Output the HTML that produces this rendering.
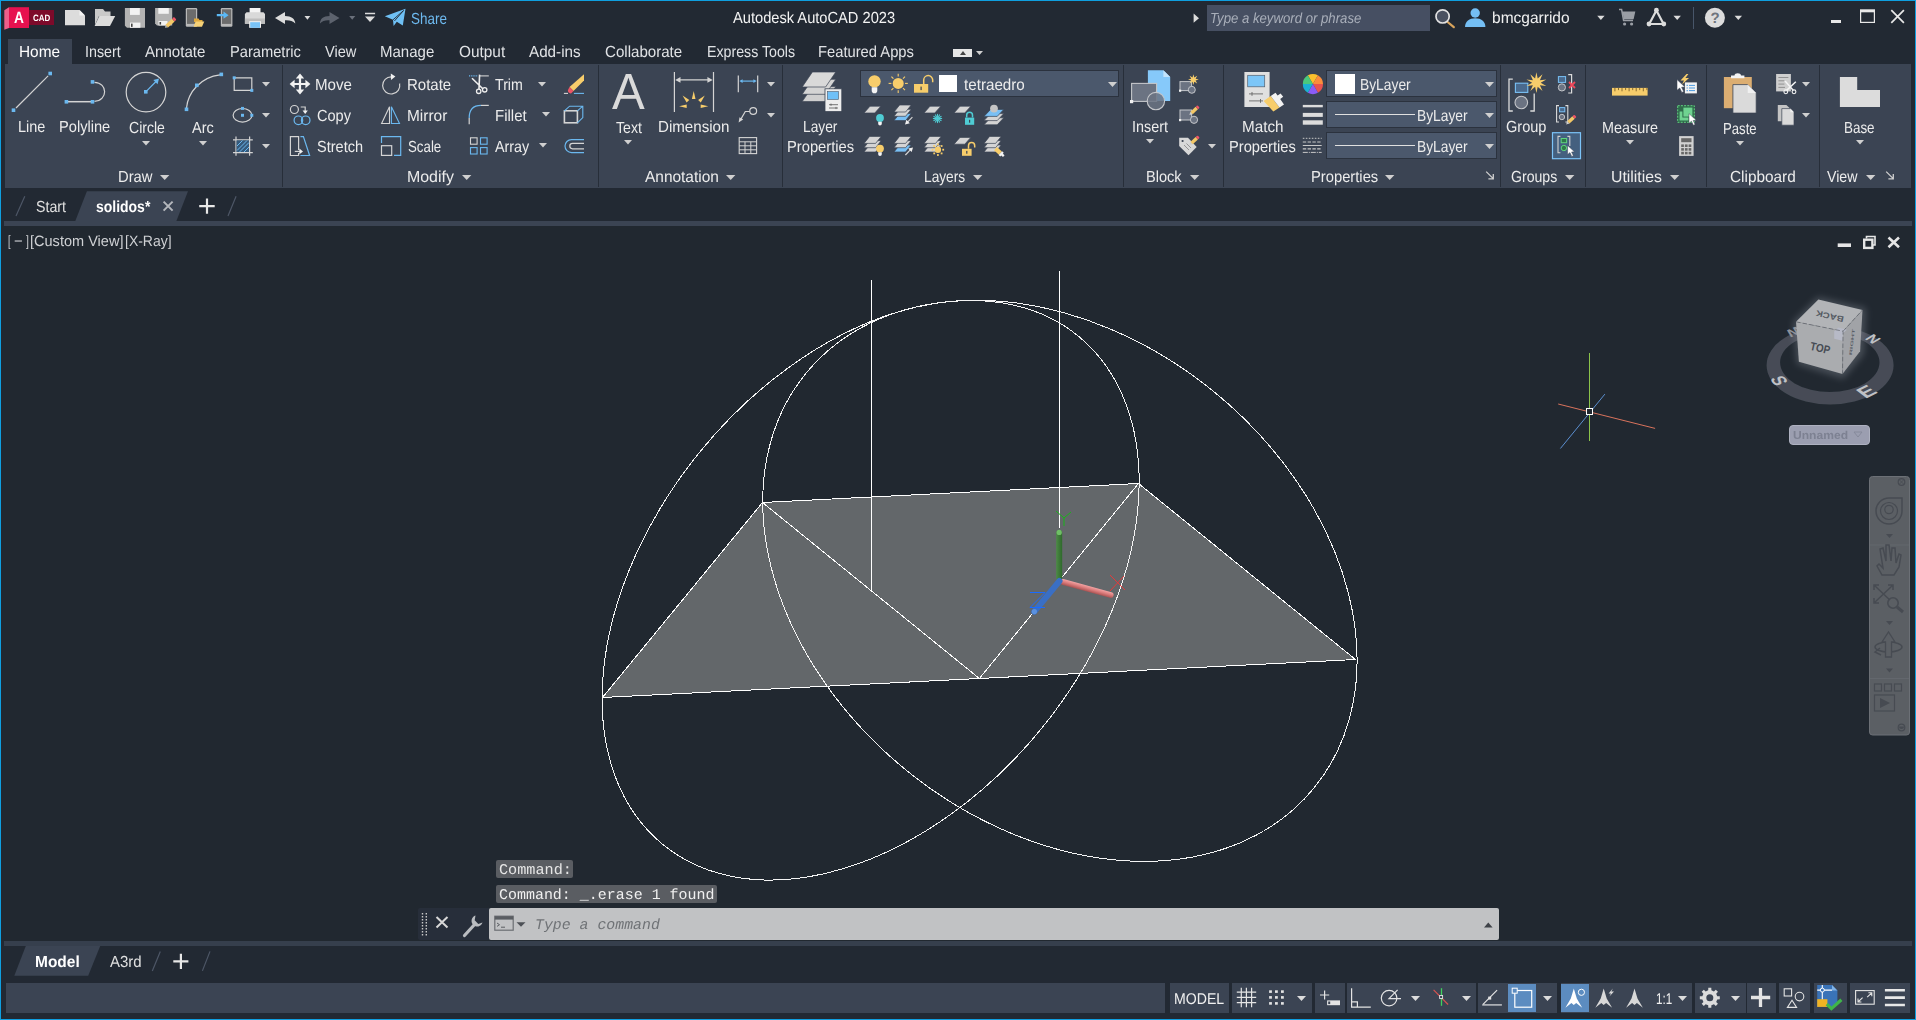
<!DOCTYPE html>
<html lang="en"><head><meta charset="utf-8"><title>Autodesk AutoCAD 2023</title>
<style>html,body{margin:0;padding:0}body{width:1916px;height:1020px;overflow:hidden;position:relative;background:#222933;font-family:'Liberation Sans', sans-serif}svg{display:block;overflow:visible}span{text-rendering:geometricPrecision}</style>
</head><body>
<div style="position:absolute;left:0px;top:0px;width:1916px;height:1020px;background:#0f9fe0;"></div>
<div style="position:absolute;left:1px;top:1px;width:1914px;height:1018px;background:#222933;"></div>
<div style="position:absolute;left:5px;top:64px;width:1906px;height:124px;background:#3b4453;"></div>
<div style="position:absolute;left:8px;top:39px;width:64px;height:26px;background:#3b4453;"></div>
<div style="position:absolute;left:1px;top:226px;width:1914px;height:715px;background:#212830;"></div>
<div style="position:absolute;left:4px;top:221px;width:1908px;height:5px;background:#3b4453;"></div>
<div style="position:absolute;left:4px;top:941px;width:1908px;height:5px;background:#363f4d;"></div>
<div style="position:absolute;left:282px;top:65px;width:1px;height:122px;background:#272e39;"></div>
<div style="position:absolute;left:598px;top:65px;width:1px;height:122px;background:#272e39;"></div>
<div style="position:absolute;left:782px;top:65px;width:1px;height:122px;background:#272e39;"></div>
<div style="position:absolute;left:1123px;top:65px;width:1px;height:122px;background:#272e39;"></div>
<div style="position:absolute;left:1223px;top:65px;width:1px;height:122px;background:#272e39;"></div>
<div style="position:absolute;left:1500px;top:65px;width:1px;height:122px;background:#272e39;"></div>
<div style="position:absolute;left:1585px;top:65px;width:1px;height:122px;background:#272e39;"></div>
<div style="position:absolute;left:1706px;top:65px;width:1px;height:122px;background:#272e39;"></div>
<div style="position:absolute;left:1819px;top:65px;width:1px;height:122px;background:#272e39;"></div>
<span style="position:absolute;left:411.30px;top:12px;font:normal 400 16px/1 'Liberation Sans', sans-serif;transform:scaleX(0.8412);transform-origin:0 0;color:#6db9ef;white-space:pre;">Share</span>
<span style="position:absolute;left:732.60px;top:11px;font:normal 400 16px/1 'Liberation Sans', sans-serif;transform:scaleX(0.9158);transform-origin:0 0;color:#f4f4f4;white-space:pre;">Autodesk AutoCAD 2023</span>
<div style="position:absolute;left:1207px;top:5px;width:223px;height:26px;background:#464f62;"></div>
<span style="position:absolute;left:1209.80px;top:12px;font:italic 400 14.6px/1 'Liberation Sans', sans-serif;transform:scaleX(0.9026);transform-origin:0 0;color:#a9afba;white-space:pre;">Type a keyword or phrase</span>
<span style="position:absolute;left:1492.03px;top:11px;font:normal 400 16px/1 'Liberation Sans', sans-serif;transform:scaleX(0.9693);transform-origin:0 0;color:#f0f0f0;white-space:pre;">bmcgarrido</span>
<span style="position:absolute;left:18.54px;top:45px;font:normal 400 16px/1 'Liberation Sans', sans-serif;transform:scaleX(0.9622);transform-origin:0 0;color:#ffffff;white-space:pre;">Home</span>
<span style="position:absolute;left:84.61px;top:45px;font:normal 400 16px/1 'Liberation Sans', sans-serif;transform:scaleX(0.8921);transform-origin:0 0;color:#e0e2e5;white-space:pre;">Insert</span>
<span style="position:absolute;left:145.20px;top:45px;font:normal 400 16px/1 'Liberation Sans', sans-serif;transform:scaleX(0.9430);transform-origin:0 0;color:#e0e2e5;white-space:pre;">Annotate</span>
<span style="position:absolute;left:230.28px;top:45px;font:normal 400 16px/1 'Liberation Sans', sans-serif;transform:scaleX(0.9168);transform-origin:0 0;color:#e0e2e5;white-space:pre;">Parametric</span>
<span style="position:absolute;left:325.10px;top:45px;font:normal 400 16px/1 'Liberation Sans', sans-serif;transform:scaleX(0.9129);transform-origin:0 0;color:#e0e2e5;white-space:pre;">View</span>
<span style="position:absolute;left:380.36px;top:45px;font:normal 400 16px/1 'Liberation Sans', sans-serif;transform:scaleX(0.9381);transform-origin:0 0;color:#e0e2e5;white-space:pre;">Manage</span>
<span style="position:absolute;left:458.60px;top:45px;font:normal 400 16px/1 'Liberation Sans', sans-serif;transform:scaleX(0.9612);transform-origin:0 0;color:#e0e2e5;white-space:pre;">Output</span>
<span style="position:absolute;left:529.30px;top:45px;font:normal 400 16px/1 'Liberation Sans', sans-serif;transform:scaleX(0.9512);transform-origin:0 0;color:#e0e2e5;white-space:pre;">Add-ins</span>
<span style="position:absolute;left:605.30px;top:45px;font:normal 400 16px/1 'Liberation Sans', sans-serif;transform:scaleX(0.9435);transform-origin:0 0;color:#e0e2e5;white-space:pre;">Collaborate</span>
<span style="position:absolute;left:706.71px;top:45px;font:normal 400 16px/1 'Liberation Sans', sans-serif;transform:scaleX(0.8865);transform-origin:0 0;color:#e0e2e5;white-space:pre;">Express Tools</span>
<span style="position:absolute;left:818.48px;top:45px;font:normal 400 16px/1 'Liberation Sans', sans-serif;transform:scaleX(0.9216);transform-origin:0 0;color:#e0e2e5;white-space:pre;">Featured Apps</span>
<div style="position:absolute;left:952.6px;top:48.5px;width:19.6px;height:8px;background:#e6e6e6;"></div>
<svg style="position:absolute;left:959.5px;top:50.5px;" width="6" height="4" viewBox="0 0 6 4"><path d="M0 4H6L3 0Z" fill="#444"/></svg>
<svg style="position:absolute;left:976.3px;top:50.5px;" width="7" height="4" viewBox="0 0 7 4"><path d="M0 0H7L3.5 4Z" fill="#d0d0d0"/></svg>
<span style="position:absolute;left:17.60px;top:120px;font:normal 400 16px/1 'Liberation Sans', sans-serif;transform:scaleX(0.9028);transform-origin:0 0;color:#ececec;white-space:pre;">Line</span>
<span style="position:absolute;left:58.69px;top:120px;font:normal 400 16px/1 'Liberation Sans', sans-serif;transform:scaleX(0.9142);transform-origin:0 0;color:#ececec;white-space:pre;">Polyline</span>
<span style="position:absolute;left:128.50px;top:121px;font:normal 400 16px/1 'Liberation Sans', sans-serif;transform:scaleX(0.8782);transform-origin:0 0;color:#ececec;white-space:pre;">Circle</span>
<span style="position:absolute;left:192.30px;top:121px;font:normal 400 16px/1 'Liberation Sans', sans-serif;transform:scaleX(0.9042);transform-origin:0 0;color:#ececec;white-space:pre;">Arc</span>
<span style="position:absolute;left:117.88px;top:170px;font:normal 400 16px/1 'Liberation Sans', sans-serif;transform:scaleX(0.9244);transform-origin:0 0;color:#ececec;white-space:pre;">Draw</span>
<span style="position:absolute;left:315.46px;top:78px;font:normal 400 16px/1 'Liberation Sans', sans-serif;transform:scaleX(0.9444);transform-origin:0 0;color:#ececec;white-space:pre;">Move</span>
<span style="position:absolute;left:317.00px;top:109px;font:normal 400 16px/1 'Liberation Sans', sans-serif;transform:scaleX(0.9103);transform-origin:0 0;color:#ececec;white-space:pre;">Copy</span>
<span style="position:absolute;left:317.30px;top:140px;font:normal 400 16px/1 'Liberation Sans', sans-serif;transform:scaleX(0.9078);transform-origin:0 0;color:#ececec;white-space:pre;">Stretch</span>
<span style="position:absolute;left:407.06px;top:78px;font:normal 400 16px/1 'Liberation Sans', sans-serif;transform:scaleX(0.9364);transform-origin:0 0;color:#ececec;white-space:pre;">Rotate</span>
<span style="position:absolute;left:406.53px;top:109px;font:normal 400 16px/1 'Liberation Sans', sans-serif;transform:scaleX(0.9653);transform-origin:0 0;color:#ececec;white-space:pre;">Mirror</span>
<span style="position:absolute;left:408.00px;top:140px;font:normal 400 16px/1 'Liberation Sans', sans-serif;transform:scaleX(0.8299);transform-origin:0 0;color:#ececec;white-space:pre;">Scale</span>
<span style="position:absolute;left:495.00px;top:78px;font:normal 400 16px/1 'Liberation Sans', sans-serif;transform:scaleX(0.8853);transform-origin:0 0;color:#ececec;white-space:pre;">Trim</span>
<span style="position:absolute;left:495.36px;top:109px;font:normal 400 16px/1 'Liberation Sans', sans-serif;transform:scaleX(0.9359);transform-origin:0 0;color:#ececec;white-space:pre;">Fillet</span>
<span style="position:absolute;left:495.00px;top:140px;font:normal 400 16px/1 'Liberation Sans', sans-serif;transform:scaleX(0.8947);transform-origin:0 0;color:#ececec;white-space:pre;">Array</span>
<span style="position:absolute;left:407.30px;top:170px;font:normal 400 16px/1 'Liberation Sans', sans-serif;transform:scaleX(0.9951);transform-origin:0 0;color:#ececec;white-space:pre;">Modify</span>
<span style="position:absolute;left:615.80px;top:121px;font:normal 400 16px/1 'Liberation Sans', sans-serif;transform:scaleX(0.8830);transform-origin:0 0;color:#ececec;white-space:pre;">Text</span>
<span style="position:absolute;left:657.76px;top:120px;font:normal 400 16px/1 'Liberation Sans', sans-serif;transform:scaleX(0.9445);transform-origin:0 0;color:#ececec;white-space:pre;">Dimension</span>
<span style="position:absolute;left:644.50px;top:170px;font:normal 400 16px/1 'Liberation Sans', sans-serif;transform:scaleX(0.9655);transform-origin:0 0;color:#ececec;white-space:pre;">Annotation</span>
<span style="position:absolute;left:803.34px;top:120px;font:normal 400 16px/1 'Liberation Sans', sans-serif;transform:scaleX(0.8590);transform-origin:0 0;color:#ececec;white-space:pre;">Layer</span>
<span style="position:absolute;left:787.38px;top:140px;font:normal 400 16px/1 'Liberation Sans', sans-serif;transform:scaleX(0.9204);transform-origin:0 0;color:#ececec;white-space:pre;">Properties</span>
<span style="position:absolute;left:923.84px;top:170px;font:normal 400 16px/1 'Liberation Sans', sans-serif;transform:scaleX(0.8570);transform-origin:0 0;color:#ececec;white-space:pre;">Layers</span>
<span style="position:absolute;left:1131.60px;top:120px;font:normal 400 16px/1 'Liberation Sans', sans-serif;transform:scaleX(0.8971);transform-origin:0 0;color:#ececec;white-space:pre;">Insert</span>
<span style="position:absolute;left:1145.79px;top:170px;font:normal 400 16px/1 'Liberation Sans', sans-serif;transform:scaleX(0.9099);transform-origin:0 0;color:#ececec;white-space:pre;">Block</span>
<span style="position:absolute;left:1241.85px;top:120px;font:normal 400 16px/1 'Liberation Sans', sans-serif;transform:scaleX(0.9527);transform-origin:0 0;color:#ececec;white-space:pre;">Match</span>
<span style="position:absolute;left:1228.88px;top:140px;font:normal 400 16px/1 'Liberation Sans', sans-serif;transform:scaleX(0.9163);transform-origin:0 0;color:#ececec;white-space:pre;">Properties</span>
<span style="position:absolute;left:1310.78px;top:170px;font:normal 400 16px/1 'Liberation Sans', sans-serif;transform:scaleX(0.9218);transform-origin:0 0;color:#ececec;white-space:pre;">Properties</span>
<span style="position:absolute;left:1506.20px;top:120px;font:normal 400 16px/1 'Liberation Sans', sans-serif;transform:scaleX(0.9087);transform-origin:0 0;color:#ececec;white-space:pre;">Group</span>
<span style="position:absolute;left:1511.30px;top:170px;font:normal 400 16px/1 'Liberation Sans', sans-serif;transform:scaleX(0.8805);transform-origin:0 0;color:#ececec;white-space:pre;">Groups</span>
<span style="position:absolute;left:1601.80px;top:121px;font:normal 400 16px/1 'Liberation Sans', sans-serif;transform:scaleX(0.8981);transform-origin:0 0;color:#ececec;white-space:pre;">Measure</span>
<span style="position:absolute;left:1611.41px;top:170px;font:normal 400 16px/1 'Liberation Sans', sans-serif;transform:scaleX(0.9869);transform-origin:0 0;color:#ececec;white-space:pre;">Utilities</span>
<span style="position:absolute;left:1722.98px;top:122px;font:normal 400 16px/1 'Liberation Sans', sans-serif;transform:scaleX(0.8222);transform-origin:0 0;color:#ececec;white-space:pre;">Paste</span>
<span style="position:absolute;left:1730.40px;top:170px;font:normal 400 16px/1 'Liberation Sans', sans-serif;transform:scaleX(0.9603);transform-origin:0 0;color:#ececec;white-space:pre;">Clipboard</span>
<span style="position:absolute;left:1843.96px;top:121px;font:normal 400 16px/1 'Liberation Sans', sans-serif;transform:scaleX(0.8378);transform-origin:0 0;color:#ececec;white-space:pre;">Base</span>
<span style="position:absolute;left:1826.50px;top:170px;font:normal 400 16px/1 'Liberation Sans', sans-serif;transform:scaleX(0.8870);transform-origin:0 0;color:#ececec;white-space:pre;">View</span>
<svg style="position:absolute;left:142.0px;top:140.8px;" width="8" height="4.5" viewBox="0 0 8 4.5"><path d="M0 0H8L4.0 4.5Z" fill="#d0d0d0"/></svg>
<svg style="position:absolute;left:199.0px;top:140.8px;" width="8" height="4.5" viewBox="0 0 8 4.5"><path d="M0 0H8L4.0 4.5Z" fill="#d0d0d0"/></svg>
<svg style="position:absolute;left:262.0px;top:81.8px;" width="8" height="4.5" viewBox="0 0 8 4.5"><path d="M0 0H8L4.0 4.5Z" fill="#d0d0d0"/></svg>
<svg style="position:absolute;left:262.0px;top:112.8px;" width="8" height="4.5" viewBox="0 0 8 4.5"><path d="M0 0H8L4.0 4.5Z" fill="#d0d0d0"/></svg>
<svg style="position:absolute;left:262.0px;top:143.8px;" width="8" height="4.5" viewBox="0 0 8 4.5"><path d="M0 0H8L4.0 4.5Z" fill="#d0d0d0"/></svg>
<svg style="position:absolute;left:159.8px;top:174.9px;" width="9.4" height="5" viewBox="0 0 9.4 5"><path d="M0 0H9.4L4.7 5Z" fill="#d0d0d0"/></svg>
<svg style="position:absolute;left:537.7px;top:81.8px;" width="8" height="4.5" viewBox="0 0 8 4.5"><path d="M0 0H8L4.0 4.5Z" fill="#d0d0d0"/></svg>
<svg style="position:absolute;left:541.5px;top:112.2px;" width="8" height="4.5" viewBox="0 0 8 4.5"><path d="M0 0H8L4.0 4.5Z" fill="#d0d0d0"/></svg>
<svg style="position:absolute;left:539.3px;top:143.2px;" width="8" height="4.5" viewBox="0 0 8 4.5"><path d="M0 0H8L4.0 4.5Z" fill="#d0d0d0"/></svg>
<svg style="position:absolute;left:462.0px;top:174.9px;" width="9.4" height="5" viewBox="0 0 9.4 5"><path d="M0 0H9.4L4.7 5Z" fill="#d0d0d0"/></svg>
<svg style="position:absolute;left:624.0px;top:140.2px;" width="8" height="4.5" viewBox="0 0 8 4.5"><path d="M0 0H8L4.0 4.5Z" fill="#d0d0d0"/></svg>
<svg style="position:absolute;left:767.0px;top:81.8px;" width="8" height="4.5" viewBox="0 0 8 4.5"><path d="M0 0H8L4.0 4.5Z" fill="#d0d0d0"/></svg>
<svg style="position:absolute;left:767.0px;top:112.8px;" width="8" height="4.5" viewBox="0 0 8 4.5"><path d="M0 0H8L4.0 4.5Z" fill="#d0d0d0"/></svg>
<svg style="position:absolute;left:726.1px;top:174.9px;" width="9.4" height="5" viewBox="0 0 9.4 5"><path d="M0 0H9.4L4.7 5Z" fill="#d0d0d0"/></svg>
<svg style="position:absolute;left:972.6px;top:174.9px;" width="9.4" height="5" viewBox="0 0 9.4 5"><path d="M0 0H9.4L4.7 5Z" fill="#d0d0d0"/></svg>
<svg style="position:absolute;left:1146.0px;top:138.8px;" width="8" height="4.5" viewBox="0 0 8 4.5"><path d="M0 0H8L4.0 4.5Z" fill="#d0d0d0"/></svg>
<svg style="position:absolute;left:1207.5px;top:143.8px;" width="8" height="4.5" viewBox="0 0 8 4.5"><path d="M0 0H8L4.0 4.5Z" fill="#d0d0d0"/></svg>
<svg style="position:absolute;left:1190.3px;top:174.9px;" width="9.4" height="5" viewBox="0 0 9.4 5"><path d="M0 0H9.4L4.7 5Z" fill="#d0d0d0"/></svg>
<svg style="position:absolute;left:1385.0px;top:174.9px;" width="9.4" height="5" viewBox="0 0 9.4 5"><path d="M0 0H9.4L4.7 5Z" fill="#d0d0d0"/></svg>
<svg style="position:absolute;left:1565.3px;top:174.9px;" width="9.4" height="5" viewBox="0 0 9.4 5"><path d="M0 0H9.4L4.7 5Z" fill="#d0d0d0"/></svg>
<svg style="position:absolute;left:1626.0px;top:140.2px;" width="8" height="4.5" viewBox="0 0 8 4.5"><path d="M0 0H8L4.0 4.5Z" fill="#d0d0d0"/></svg>
<svg style="position:absolute;left:1670.3px;top:174.9px;" width="9.4" height="5" viewBox="0 0 9.4 5"><path d="M0 0H9.4L4.7 5Z" fill="#d0d0d0"/></svg>
<svg style="position:absolute;left:1736.0px;top:141.2px;" width="8" height="4.5" viewBox="0 0 8 4.5"><path d="M0 0H8L4.0 4.5Z" fill="#d0d0d0"/></svg>
<svg style="position:absolute;left:1802.0px;top:82.2px;" width="8" height="4.5" viewBox="0 0 8 4.5"><path d="M0 0H8L4.0 4.5Z" fill="#d0d0d0"/></svg>
<svg style="position:absolute;left:1802.0px;top:113.2px;" width="8" height="4.5" viewBox="0 0 8 4.5"><path d="M0 0H8L4.0 4.5Z" fill="#d0d0d0"/></svg>
<svg style="position:absolute;left:1856.0px;top:139.8px;" width="8" height="4.5" viewBox="0 0 8 4.5"><path d="M0 0H8L4.0 4.5Z" fill="#d0d0d0"/></svg>
<svg style="position:absolute;left:1866.0px;top:174.9px;" width="9.4" height="5" viewBox="0 0 9.4 5"><path d="M0 0H9.4L4.7 5Z" fill="#d0d0d0"/></svg>
<div style="position:absolute;left:860px;top:70px;width:259px;height:27px;background:#4b586c;box-sizing:border-box;border:1px solid #2b323e"></div>
<div style="position:absolute;left:939.3px;top:75.3px;width:17.5px;height:17.2px;background:#ffffff;"></div>
<span style="position:absolute;left:963.60px;top:78px;font:normal 400 16px/1 'Liberation Sans', sans-serif;transform:scaleX(0.9495);transform-origin:0 0;color:#ececec;white-space:pre;">tetraedro</span>
<svg style="position:absolute;left:1108.2px;top:82.0px;" width="9" height="5" viewBox="0 0 9 5"><path d="M0 0H9L4.5 5Z" fill="#d0d0d0"/></svg>
<div style="position:absolute;left:1326px;top:70px;width:171px;height:27px;background:#4b586c;box-sizing:border-box;border:1px solid #2b323e"></div>
<svg style="position:absolute;left:1485.0px;top:82.0px;" width="9" height="5" viewBox="0 0 9 5"><path d="M0 0H9L4.5 5Z" fill="#d0d0d0"/></svg>
<div style="position:absolute;left:1326px;top:101px;width:171px;height:27px;background:#4b586c;box-sizing:border-box;border:1px solid #2b323e"></div>
<svg style="position:absolute;left:1485.0px;top:113.0px;" width="9" height="5" viewBox="0 0 9 5"><path d="M0 0H9L4.5 5Z" fill="#d0d0d0"/></svg>
<div style="position:absolute;left:1326px;top:132px;width:171px;height:27px;background:#4b586c;box-sizing:border-box;border:1px solid #2b323e"></div>
<svg style="position:absolute;left:1485.0px;top:144.0px;" width="9" height="5" viewBox="0 0 9 5"><path d="M0 0H9L4.5 5Z" fill="#d0d0d0"/></svg>
<div style="position:absolute;left:1335px;top:74.2px;width:20px;height:19.6px;background:#ffffff;"></div>
<span style="position:absolute;left:1359.74px;top:78px;font:normal 400 16px/1 'Liberation Sans', sans-serif;transform:scaleX(0.8635);transform-origin:0 0;color:#ececec;white-space:pre;">ByLayer</span>
<div style="position:absolute;left:1335px;top:113.7px;width:80px;height:1px;background:#e0e0e0;"></div>
<span style="position:absolute;left:1416.84px;top:109px;font:normal 400 16px/1 'Liberation Sans', sans-serif;transform:scaleX(0.8618);transform-origin:0 0;color:#ececec;white-space:pre;">ByLayer</span>
<div style="position:absolute;left:1335px;top:144.7px;width:80px;height:1px;background:#e0e0e0;"></div>
<span style="position:absolute;left:1416.84px;top:140px;font:normal 400 16px/1 'Liberation Sans', sans-serif;transform:scaleX(0.8618);transform-origin:0 0;color:#ececec;white-space:pre;">ByLayer</span>
<svg style="position:absolute;left:0px;top:188px;" width="260" height="38" viewBox="0 0 260 38"><path d="M16 27.9L24.8 8.2M228 27.9L236.1 8.2" stroke="#4d5666" stroke-width="1.2" fill="none"/><path d="M75.3 33L86.9 3.2H188L176.4 33Z" fill="#3b4453"/><path d="M163.6 13.6L172.6 22.6M172.6 13.6L163.6 22.6" stroke="#b4b7bc" stroke-width="2" fill="none"/><path d="M199.2 18.2H214.7M207 10.6V25.8" stroke="#e8e8e8" stroke-width="2.2" fill="none"/></svg>
<span style="position:absolute;left:35.60px;top:200px;font:normal 400 16px/1 'Liberation Sans', sans-serif;transform:scaleX(0.8881);transform-origin:0 0;color:#e0e0e0;white-space:pre;">Start</span>
<span style="position:absolute;left:96.30px;top:200px;font:normal 700 16px/1 'Liberation Sans', sans-serif;transform:scaleX(0.8729);transform-origin:0 0;color:#ffffff;white-space:pre;">solidos*</span>
<span style="position:absolute;left:8.28px;top:234px;font:normal 400 15px/1 'Liberation Sans', sans-serif;transform:scaleX(0.6250);transform-origin:0 0;color:#cfd1d4;white-space:pre;">[</span>
<span style="position:absolute;left:14.20px;top:234px;font:normal 400 15px/1 'Liberation Sans', sans-serif;transform:scaleX(0.9889);transform-origin:0 0;color:#cfd1d4;white-space:pre;">−</span>
<span style="position:absolute;left:25.80px;top:234px;font:normal 400 15px/1 'Liberation Sans', sans-serif;transform:scaleX(0.7000);transform-origin:0 0;color:#cfd1d4;white-space:pre;">]</span>
<span style="position:absolute;left:30.23px;top:234px;font:normal 400 15px/1 'Liberation Sans', sans-serif;transform:scaleX(0.9690);transform-origin:0 0;color:#cfd1d4;white-space:pre;">[Custom View]</span>
<span style="position:absolute;left:125.27px;top:234px;font:normal 400 15px/1 'Liberation Sans', sans-serif;transform:scaleX(0.9316);transform-origin:0 0;color:#cfd1d4;white-space:pre;">[X-Ray]</span>
<svg style="position:absolute;left:1830px;top:232px;" width="76" height="20" viewBox="0 0 76 20"><rect x="7.7" y="11.4" width="13.3" height="3.6" fill="#e6e6e6"/><path d="M36.5 6.5V4.5H45V13H43" stroke="#e6e6e6" stroke-width="1.6" fill="none"/><rect x="34.2" y="7.7" width="8.2" height="8.2" stroke="#e6e6e6" stroke-width="2.4" fill="none"/><path d="M58.5 5.5L69 15.2M69 5.5L58.5 15.2" stroke="#e6e6e6" stroke-width="2.6" fill="none"/></svg>
<svg style="position:absolute;left:0;top:226px" width="1916" height="715" viewBox="0 226 1916 715"><polygon points="602.5,697.5 762.5,502.5 1138.5,483.5 1355.5,659.5" fill="#63676a"/><g fill="none" stroke="#ffffff" stroke-width="1" shape-rendering="crispEdges"><polygon points="602.5,697.5 762.5,502.5 1138.5,483.5 1355.5,659.5"/><path d="M762.5 502.5L979.4 678.5L1138.5 483.5"/><path d="M871.5 280V590M1059.5 271V528"/></g><g fill="none" stroke="#f4f4f4" stroke-width="1" shape-rendering="crispEdges"><ellipse cx="870.6" cy="590.3" rx="328.3" ry="219.8" transform="rotate(-50.75 870.6 590.3)"/><ellipse cx="1059.9" cy="580.8" rx="327.9" ry="243.9" transform="rotate(39.24 1059.9 580.8)"/></g><defs><linearGradient id="gy" x1="0" x2="1"><stop offset="0" stop-color="#4c8c45"/><stop offset=".45" stop-color="#3f7a3a"/><stop offset="1" stop-color="#2f6a2c"/></linearGradient><linearGradient id="gx" x1="0" x2="0" y1="0" y2="1"><stop offset="0" stop-color="#f2a3a3"/><stop offset=".5" stop-color="#d97a7a"/><stop offset="1" stop-color="#a85252"/></linearGradient></defs><rect x="1056.2" y="530" width="6" height="51" rx="3" fill="url(#gy)"/><circle cx="1059.2" cy="532.4" r="2.6" fill="#6fbf66"/><g transform="rotate(15.4 1060 581)"><rect x="1060" y="578.2" width="55.5" height="5.8" rx="2.9" fill="url(#gx)"/></g><path d="M1059.5 581L1034.3 611.6" stroke="#3a6fc4" stroke-width="6" stroke-linecap="round"/><circle cx="1034.4" cy="611.6" r="2.6" fill="#5c92e0"/><path d="M1056 511L1064 518L1071 512M1064 518V526" stroke="#19b419" stroke-width="1" fill="none"/><path d="M1110 575L1125 590M1124 576L1110 591" stroke="#e23a3a" stroke-width="1" fill="none"/><path d="M1030 592.5H1045L1030 607.5H1045" stroke="#1a6bff" stroke-width="1" fill="none"/><path d="M1589.5 353V441" stroke="#8bc34a" stroke-width="1"/><path d="M1558.2 404L1655.1 428.4" stroke="#d9735c" stroke-width="1"/><path d="M1560.4 448.5L1604.9 394.1" stroke="#5b8fd0" stroke-width="1"/><rect x="1586.5" y="408.5" width="6" height="6" fill="#212830" stroke="#ffffff" stroke-width="1"/></svg>
<svg style="position:absolute;left:1750px;top:280px" width="160" height="175" viewBox="1750 280 160 175"><defs><filter id="bl" x="-20%" y="-20%" width="140%" height="140%"><feGaussianBlur stdDeviation="0.5"/></filter><filter id="gl" x="-30%" y="-30%" width="160%" height="160%"><feGaussianBlur stdDeviation="3.5"/></filter></defs><path fill-rule="evenodd" fill="#464c56" filter="url(#bl)" d="M1766.6 365.2a63.5 39.3 0 1 0 127 0a63.5 39.3 0 1 0 -127 0ZM1780.1 362.6a49.7 29.4 0 1 0 99.4 0a49.7 29.4 0 1 0 -99.4 0Z"/></svg>
<span style="position:absolute;left:1833.4px;top:328.6px;width:80px;height:20px;line-height:20px;text-align:center;font-size:17.5px;font-weight:700;color:#bfc1c5;transform:scaleY(0.62) rotate(46deg) scale(1,1);">N</span>
<span style="position:absolute;left:1826.8px;top:382.4px;width:80px;height:20px;line-height:20px;text-align:center;font-size:25px;font-weight:700;color:#bfc1c5;transform:scaleY(0.62) rotate(-39deg) scale(1,1);">E</span>
<span style="position:absolute;left:1737.6px;top:371.2px;width:80px;height:20px;line-height:20px;text-align:center;font-size:21px;font-weight:700;color:#bfc1c5;transform:scaleY(0.62) rotate(63deg) scale(1,1);">S</span>
<span style="position:absolute;left:1753.5px;top:320.5px;width:80px;height:20px;line-height:20px;text-align:center;font-size:17px;font-weight:700;color:#8d9199;transform:scaleY(0.62) rotate(146deg) scale(1,1);">W</span>
<svg style="position:absolute;left:1750px;top:280px" width="160" height="175" viewBox="1750 280 160 175"><polygon points="1818,297 1866,308 1864,354 1843,379 1797,364 1793,322" fill="#9aa0ab" opacity=".32" filter="url(#gl)"/><g filter="url(#bl)"><polygon points="1818.4,299.4 1862.5,310 1843.1,331.2 1796,321.8" fill="#b2b4b7"/><polygon points="1796,321.8 1843.1,331.2 1842.5,374.1 1798.9,361.8" fill="#aaacaf"/><polygon points="1843.1,331.2 1862.5,310 1860.1,351.2 1842.5,374.1" fill="#a1a3a7"/><polygon points="1834.2,331.2 1838.4,327.4 1846.8,329.8 1842.8,333.3 1842.5,340.8 1834.2,338.8" fill="#b7bac7"/><path d="M1796 321.8L1843.1 331.2L1842.5 374.1M1843.1 331.2L1862.5 310" stroke="#5d6169" stroke-width=".7" stroke-dasharray="4.5 2.2" fill="none"/></g></svg>
<span style="position:absolute;left:1779.6px;top:338.8px;width:80px;height:20px;line-height:20px;text-align:center;font-size:11.5px;font-weight:700;color:#464b53;transform: rotate(12.5deg) scale(0.86,1);">TOP</span>
<span style="position:absolute;left:1790.2px;top:304.6px;width:80px;height:20px;line-height:20px;text-align:center;font-size:10px;font-weight:700;color:#555a62;transform: rotate(193deg) scale(0.98,0.8);">BACK</span>
<span style="position:absolute;left:1812.3px;top:331.6px;width:80px;height:20px;line-height:20px;text-align:center;font-size:9px;font-weight:700;color:#5b5f67;transform: rotate(-83deg) scale(0.95,0.42);">RIGHT</span>
<div style="position:absolute;left:1789px;top:424.5px;width:81px;height:20px;background:#9b9eb0;border-radius:4px;box-sizing:border-box;border:1px solid #aeb1c0"></div>
<span style="position:absolute;left:1793.00px;top:431px;font:normal 700 11.5px/1 'Liberation Sans', sans-serif;transform:scaleX(1.0502);transform-origin:0 0;color:#7d8192;white-space:pre;">Unnamed</span>
<svg style="position:absolute;left:1853px;top:431px;" width="10" height="7" viewBox="0 0 10 7"><path d="M1 1H9L5 6Z" fill="none" stroke="#868a9b" stroke-width="1"/></svg>
<svg style="position:absolute;left:1868px;top:475px" width="43" height="262" viewBox="1868 475 43 262"><rect x="1869.5" y="476.5" width="40" height="258.5" rx="3" fill="#5b5f64" stroke="#6c7076" stroke-width="1"/><g fill="none" stroke="#474b52" stroke-width="1.2"><circle cx="1901.5" cy="482" r="3.3"/><path d="M1899.5 480L1903.5 484M1903.5 480L1899.5 484" stroke-width=".8"/><circle cx="1901.5" cy="727.5" r="3.3"/><path d="M1889 498a13 13 0 1 0 13 13V498Z" stroke-width="1.5"/><circle cx="1889" cy="511" r="8.5"/><circle cx="1889" cy="509.5" r="4.2"/><path d="M1870 545H1909M1870 678.5H1909" stroke="#666a70" stroke-width=".8"/><path d="M1877 566l5 9h12l5-8l2-12l-2-1l-3 9l-1-15l-3 0l-1 13l-2-16l-3 0v16l-3-13l-3 1l3 19l-4-4Z" stroke-width="1.5"/><path d="M1874 585L1893 603M1893 585L1874 603M1874 590V585H1879M1888 585H1893V590M1874 598V603H1879" stroke-width="1.5"/><circle cx="1893" cy="603" r="5.2" fill="#5b5f64" stroke-width="1.6"/><path d="M1897 607L1903 612" stroke-width="3"/><ellipse cx="1888.5" cy="647" rx="13.5" ry="5" stroke-width="1.5"/><path d="M1885.5 657V642H1882L1888.5 632L1895 642H1891.5V657Z" fill="#5b5f64" stroke-width="1.3"/><path d="M1880 648l-5 4l6 3" stroke-width="1.5"/><rect x="1874.5" y="684" width="7" height="7"/><rect x="1884.5" y="684" width="7" height="7"/><rect x="1894.5" y="684" width="7" height="7"/><rect x="1874.5" y="695" width="20" height="16"/></g><g fill="#474b52"><path d="M1886 534h7l-3.5 4Z"/><path d="M1886 621h7l-3.5 4Z"/><path d="M1886 668.5h7l-3.5 4Z"/><path d="M1880 698l10 5l-10 5Z"/><path d="M1899 726.5h5a2.5 2.5 0 0 1 -5 0Z"/></g></svg>
<div style="position:absolute;left:496px;top:859.5px;width:77px;height:18px;background:#5a5d62;border-radius:2px"></div>
<div style="position:absolute;left:496px;top:884.5px;width:221px;height:18px;background:#5a5d62;border-radius:2px"></div>
<span style="position:absolute;left:498.60px;top:864px;font:normal 400 14.8px/1 'Liberation Mono', monospace;transform:scaleX(1.0270);transform-origin:0 0;color:#e6e6e6;white-space:pre;">Command:</span>
<span style="position:absolute;left:498.60px;top:889px;font:normal 400 14.8px/1 'Liberation Mono', monospace;transform:scaleX(1.0112);transform-origin:0 0;color:#f0f0f0;white-space:pre;">Command: _.erase 1 found</span>
<div style="position:absolute;left:417.5px;top:908px;width:71px;height:32px;background:#272e3a;border-radius:2px 0 0 2px"></div>
<div style="position:absolute;left:488.5px;top:908px;width:1010.5px;height:31.5px;background:#c1c2c4;border-radius:2px"></div>
<svg style="position:absolute;left:417px;top:908px;" width="72" height="32" viewBox="0 0 72 32"><g fill="#c8c8c8"><rect x="4.8" y="5" width="1.4" height="1.5"/><rect x="4.8" y="8" width="1.4" height="1.5"/><rect x="4.8" y="11" width="1.4" height="1.5"/><rect x="4.8" y="14" width="1.4" height="1.5"/><rect x="4.8" y="17" width="1.4" height="1.5"/><rect x="4.8" y="20" width="1.4" height="1.5"/><rect x="4.8" y="23" width="1.4" height="1.5"/><rect x="4.8" y="26" width="1.4" height="1.5"/><rect x="8.6" y="5" width="1.4" height="1.5"/><rect x="8.6" y="8" width="1.4" height="1.5"/><rect x="8.6" y="11" width="1.4" height="1.5"/><rect x="8.6" y="14" width="1.4" height="1.5"/><rect x="8.6" y="17" width="1.4" height="1.5"/><rect x="8.6" y="20" width="1.4" height="1.5"/><rect x="8.6" y="23" width="1.4" height="1.5"/><rect x="8.6" y="26" width="1.4" height="1.5"/></g><path d="M19.5 9L30.5 19.5M30.5 9L19.5 19.5" stroke="#d8d8d8" stroke-width="2" fill="none"/><path d="M47.5 27.5L58 16" stroke="#b9bcc0" stroke-width="3.2" stroke-linecap="round" fill="none"/><path d="M58.5 7.6a5.6 5.6 0 1 0 7 7l-4.2 1.3l-3.6-3.6Z" fill="#b9bcc0"/></svg>
<svg style="position:absolute;left:494px;top:915px;" width="30" height="18" viewBox="0 0 30 18"><rect x=".8" y="1.2" width="18.4" height="14" fill="#c1c2c4" stroke="#6b6e73" stroke-width="1.2"/><rect x=".8" y="1.2" width="18.4" height="3.4" fill="#5a5d62"/><path d="M3 8l2.5 1.7L3 11.4M7 12.2h4" stroke="#5a5d62" stroke-width="1" fill="none"/><path d="M22.5 7.2h9l-4.5 4.6Z" fill="#4d5056"/></svg>
<span style="position:absolute;left:534.50px;top:919px;font:italic 400 14.8px/1 'Liberation Mono', monospace;transform:scaleX(1.0046);transform-origin:0 0;color:#6f7276;white-space:pre;">Type a command</span>
<svg style="position:absolute;left:1484px;top:922px;" width="9" height="6" viewBox="0 0 9 6"><path d="M0 5.5H8.6L4.3 0.5Z" fill="#3f4248"/></svg>
<svg style="position:absolute;left:0px;top:944px;" width="260" height="36" viewBox="0 0 260 36"><path d="M25.8 2L100.2 2L88.2 31.7H14.3Z" fill="#3b4453"/><path d="M152.3 26.9L160.3 7.4M202.4 26.9L210 7.4" stroke="#4d5666" stroke-width="1.2" fill="none"/><path d="M173.3 17.4H188.4M180.9 9.8V25" stroke="#e8e8e8" stroke-width="2.2" fill="none"/></svg>
<span style="position:absolute;left:34.63px;top:955px;font:normal 700 16px/1 'Liberation Sans', sans-serif;transform:scaleX(0.9671);transform-origin:0 0;color:#ffffff;white-space:pre;">Model</span>
<span style="position:absolute;left:109.50px;top:955px;font:normal 400 16px/1 'Liberation Sans', sans-serif;transform:scaleX(0.9362);transform-origin:0 0;color:#e0e0e0;white-space:pre;">A3rd</span>
<div style="position:absolute;left:6px;top:983px;width:1159px;height:30px;background:#3b4453;"></div>
<div style="position:absolute;left:1170px;top:983px;width:59px;height:30px;background:#3b4453;"></div>
<div style="position:absolute;left:1232px;top:983px;width:80px;height:30px;background:#3b4453;"></div>
<div style="position:absolute;left:1315px;top:983px;width:30px;height:30px;background:#3b4453;"></div>
<div style="position:absolute;left:1346.5px;top:983px;width:129.5px;height:30px;background:#3b4453;"></div>
<div style="position:absolute;left:1477.5px;top:983px;width:79.5px;height:30px;background:#3b4453;"></div>
<div style="position:absolute;left:1561px;top:983px;width:131px;height:30px;background:#3b4453;"></div>
<div style="position:absolute;left:1695px;top:983px;width:50.5px;height:30px;background:#3b4453;"></div>
<div style="position:absolute;left:1746.5px;top:983px;width:29.5px;height:30px;background:#3b4453;"></div>
<div style="position:absolute;left:1779px;top:983px;width:31px;height:30px;background:#3b4453;"></div>
<div style="position:absolute;left:1813.5px;top:983px;width:33.5px;height:30px;background:#3b4453;"></div>
<div style="position:absolute;left:1850px;top:983px;width:60px;height:30px;background:#3b4453;"></div>
<span style="position:absolute;left:1173.99px;top:992px;font:normal 400 15.5px/1 'Liberation Sans', sans-serif;transform:scaleX(0.9101);transform-origin:0 0;color:#f0f0f0;white-space:pre;">MODEL</span>
<div style="position:absolute;left:1508px;top:984px;width:28px;height:28px;background:#5c8cc0;"></div>
<div style="position:absolute;left:1561px;top:984px;width:28px;height:28px;background:#5c8cc0;"></div>
<span style="position:absolute;left:1655.75px;top:992px;font:normal 400 15.5px/1 'Liberation Sans', sans-serif;transform:scaleX(0.7528);transform-origin:0 0;color:#f0f0f0;white-space:pre;">1:1</span>
<svg style="position:absolute;left:1297.3px;top:995.8px;" width="9" height="5" viewBox="0 0 9 5"><path d="M0 0H9L4.5 5Z" fill="#dcdcdc"/></svg>
<svg style="position:absolute;left:1411.4px;top:995.8px;" width="9" height="5" viewBox="0 0 9 5"><path d="M0 0H9L4.5 5Z" fill="#dcdcdc"/></svg>
<svg style="position:absolute;left:1461.5px;top:995.8px;" width="9" height="5" viewBox="0 0 9 5"><path d="M0 0H9L4.5 5Z" fill="#dcdcdc"/></svg>
<svg style="position:absolute;left:1542.6px;top:995.8px;" width="9" height="5" viewBox="0 0 9 5"><path d="M0 0H9L4.5 5Z" fill="#dcdcdc"/></svg>
<svg style="position:absolute;left:1677.5px;top:995.8px;" width="9" height="5" viewBox="0 0 9 5"><path d="M0 0H9L4.5 5Z" fill="#dcdcdc"/></svg>
<svg style="position:absolute;left:1730.6px;top:995.8px;" width="9" height="5" viewBox="0 0 9 5"><path d="M0 0H9L4.5 5Z" fill="#dcdcdc"/></svg>
<svg style="position:absolute;left:0;top:0" width="1916" height="36" viewBox="0 0 1916 36"><path d="M4.3 10.2L9 7.2V28L4.3 29.8Z" fill="#ee5f8a"/><rect x="9" y="7.2" width="20" height="20.8" fill="#e7114f"/><rect x="29" y="10" width="25" height="15" fill="#7d0a2a"/><path d="M65 10H79.5L85 15.5V25.3H65Z" fill="#dcdcdc"/><path d="M79.5 10V15.5H85Z" fill="#f4f4f4"/><path d="M95 9.1H103L105 11.5H110.5V16H99L95 25Z" fill="#c9c9c9"/><path d="M99.3 16H115.2L110 25.9H94.6Z" fill="#dcdcdc"/><path d="M124.9 8H145V27.8H127L124.9 25.8Z" fill="#b3b3b3"/><rect x="130" y="8" width="9.8" height="6.9" fill="#f2f2f2"/><rect x="130" y="22.6" width="10.4" height="5.2" fill="#f2f2f2"/><rect x="131" y="23.6" width="1.6" height="3.3" fill="#444"/><path d="M155.1 8H172.2V25.5H157L155.1 23.6Z" fill="#b3b3b3"/><rect x="158.3" y="8" width="10.5" height="5.8" fill="#f2f2f2"/><rect x="158.5" y="21" width="9" height="4.5" fill="#f2f2f2"/><rect x="159.5" y="22" width="1.6" height="2.6" fill="#444"/><g transform="rotate(-43 165 27.8)"><path d="M165 27.8L167.4 25.9V29.7Z" fill="#b0b0b0"/><rect x="167.4" y="25.9" width="9" height="3.8" fill="#f3c766"/><rect x="176.4" y="25.9" width="2.6" height="3.8" rx="1" fill="#ee5566"/></g><rect x="185.8" y="8" width="11.4" height="18.7" rx="1.2" fill="#b9b9b9"/><rect x="187" y="9.3" width="9" height="14.6" fill="#6c6c6c"/><path d="M194 18.6H198.5L199.5 20H202.5V22H194Z" fill="#e0a93d"/><path d="M195.6 21.6H204.3L202 26.8H193.6Z" fill="#f6d177"/><rect x="220.8" y="8" width="11.6" height="18.7" rx="1.2" fill="#b9b9b9"/><rect x="222" y="9.3" width="9.2" height="14.6" fill="#6c6c6c"/><path d="M216.8 14.1H223.5V11.6L228.6 15.2L223.5 18.8V16.3H216.8Z" fill="#5bb8f5"/><rect x="249.6" y="8" width="10.9" height="5" fill="#f4f4f4"/><path d="M246.5 12.3H263.5L265 14V23.8H244.9V14Z" fill="#d9d9d9"/><rect x="244.9" y="18.5" width="20.1" height="5.3" fill="#bdbdbd"/><rect x="249.2" y="21.2" width="11.8" height="6.6" fill="#f4f4f4"/><rect x="250.2" y="22.2" width="9.8" height="5.6" fill="#79c3f7"/><path d="M275 18.1L285 12.1V16C291.5 16 295 19 295.3 23.4C292.8 20.6 289.5 20 285 20.2V23.9Z" fill="#dcdcdc"/><path d="M339.5 18.1L329.5 12.1V16C323 16 320.2 19 320 23.4C322.5 20.6 325 20 329.5 20.2V23.9Z" fill="#5c626d"/><path d="M304.5 16H310.3L307.4 19.8Z" fill="#dcdcdc"/><path d="M349.2 16H355.3L352.2 19.8Z" fill="#6a707b"/><path d="M365 12.8H375.1V14.2H365ZM365 16.4H375.1L370 22.1Z" fill="#dcdcdc"/><path d="M384.8 16.2L405.5 8.7L402.8 25.5L396.8 21.8L393.6 26.1L393 19.8Z" fill="#6fc0f5"/><path d="M393 19.8L403.6 10.5L394.4 21" stroke="#222933" stroke-width=".9" fill="none"/><path d="M1193.6 13.6L1199 18.2L1193.6 22.8Z" fill="#dcdcdc"/><path d="M1447 21.5L1453.8 27.2" stroke="#d9a45c" stroke-width="2.2" stroke-linecap="round"/><circle cx="1442.6" cy="16.4" r="6.6" fill="#4a5160" stroke="#e2e2e2" stroke-width="1.7"/><circle cx="1475.2" cy="13" r="4.7" fill="#74bef4"/><path d="M1465 27C1465 21.5 1469.5 18.2 1475.2 18.2C1481 18.2 1485.4 21.5 1485.4 27Z" fill="#74bef4"/><path d="M1597.2 15.8H1604.6L1600.9 20Z" fill="#dcdcdc"/><path d="M1619 9.6H1621.6L1623.6 20.5H1633M1622.3 12.2H1634.4L1633 18.4H1623.4" stroke="#9a9ea5" stroke-width="1.5" fill="none"/><path d="M1622.6 12.2H1634.4L1633 18.4H1623.6Z" fill="#9a9ea5"/><circle cx="1624.6" cy="24" r="1.6" fill="#9a9ea5"/><circle cx="1631.6" cy="24" r="1.6" fill="#9a9ea5"/><path d="M1656.4 10.5L1649.2 24H1663.6Z" stroke="#dcdcdc" stroke-width="2.2" fill="none" stroke-linejoin="round"/><circle cx="1656.4" cy="10.2" r="2.4" fill="#dcdcdc"/><circle cx="1649" cy="24" r="2.4" fill="#dcdcdc"/><circle cx="1663.8" cy="24" r="2.4" fill="#dcdcdc"/><path d="M1673.5 15.8H1680.9L1677.2 20Z" fill="#dcdcdc"/><rect x="1693" y="7" width="1" height="22" fill="#48566a"/><circle cx="1714.9" cy="17.8" r="10" fill="#dcdcdc"/><path d="M1734.6 15.8H1742L1738.3 20Z" fill="#dcdcdc"/><rect x="1831" y="20" width="10" height="3" fill="#e8e8e8"/><rect x="1860.6" y="10.6" width="13.8" height="11.8" fill="none" stroke="#e8e8e8" stroke-width="1.2"/><rect x="1860" y="9.3" width="15" height="3" fill="#e8e8e8"/><path d="M1891.3 10.2L1903.9 22.8M1903.9 10.2L1891.3 22.8" stroke="#e8e8e8" stroke-width="1.7" fill="none"/></svg>
<span style="position:absolute;left:14.00px;top:10px;font:normal 700 16.5px/1 'Liberation Sans', sans-serif;transform:scaleX(0.8333);transform-origin:0 0;color:#ffffff;white-space:pre;">A</span>
<span style="position:absolute;left:32.80px;top:14px;font:normal 700 9.2px/1 'Liberation Sans', sans-serif;transform:scaleX(0.8683);transform-origin:0 0;color:#ffffff;white-space:pre;">CAD</span>
<span style="position:absolute;left:1710px;top:9.5px;width:10px;text-align:center;font:700 15px/17px 'Liberation Sans',sans-serif;color:#6f747d">?</span>
<svg style="position:absolute;left:0;top:64px" width="1916" height="124" viewBox="0 64 1916 124"><g fill="none" stroke="#d4d4d4" stroke-width="1.2"><path d="M16 108L48.1 75.9"/><path d="M66.4 101.7H92.5" stroke-width="1.5"/><path d="M94.5 82.3C108 83 108 100.5 94.5 101.4"/><circle cx="146" cy="92.1" r="19.8"/><path d="M186.5 108C188 92 201 77 220 74.8"/><path d="M234.2 77.8H251.8V90.4H234.2Z"/><ellipse cx="242.5" cy="115.3" rx="9.4" ry="6.8"/><path d="M233 139.8H252.8M233 152.6H252.8M236 136.4V155.7M249.6 136.4V155.7"/></g><path d="M236.6 140.4H249V152H236.6Z" fill="#355a7c"/><path d="M237 146l5.5-5.5M237 150.5l10-10M239.5 152l9.5-9.5M244 152l5-5" stroke="#6bb8ef" stroke-width="1" fill="none"/><rect x="48.4" y="71.7" width="3.6" height="3.6" fill="#6bb8ef"/><rect x="11.7" y="108.4" width="3.6" height="3.6" fill="#6bb8ef"/><rect x="64.6" y="100.0" width="3.6" height="3.6" fill="#6bb8ef"/><rect x="90.7" y="100.0" width="3.6" height="3.6" fill="#6bb8ef"/><rect x="90.7" y="80.1" width="3.6" height="3.6" fill="#6bb8ef"/><rect x="144.0" y="90.0" width="3.6" height="3.6" fill="#6bb8ef"/><path d="M147 90.6L156.5 81" stroke="#6bb8ef" stroke-width="1.3"/><path d="M159 78.6L157.6 84.3L153.3 80Z" fill="#6bb8ef"/><rect x="184.7" y="107.5" width="3.6" height="3.6" fill="#6bb8ef"/><rect x="195.0" y="83.5" width="3.6" height="3.6" fill="#6bb8ef"/><rect x="219.5" y="72.6" width="3.6" height="3.6" fill="#6bb8ef"/><rect x="232.7" y="76.3" width="3" height="3" fill="#6bb8ef"/><rect x="250.3" y="88.9" width="3" height="3" fill="#6bb8ef"/><rect x="241.0" y="106.9" width="3" height="3" fill="#6bb8ef"/><rect x="241.0" y="113.8" width="3" height="3" fill="#6bb8ef"/><rect x="250.3" y="113.8" width="3" height="3" fill="#6bb8ef"/><path d="M300 76V92M292 84H308" stroke="#f2f2f2" stroke-width="2.2" fill="none"/><path d="M300 73.6L304.2 78.6H295.8ZM300 94.4L304.2 89.4H295.8ZM289.6 84L294.6 79.8V88.2ZM310.4 84L305.4 79.8V88.2Z" fill="#f2f2f2"/><circle cx="294.4" cy="109.5" r="4" fill="none" stroke="#d4d4d4" stroke-width="1.2"/><path d="M300.7 107H305.2V111" fill="none" stroke="#d4d4d4" stroke-width="1.2"/><path d="M302.6 110.5H307.8L305.2 114Z" fill="#f2f2f2"/><circle cx="298.4" cy="120.3" r="4.3" fill="none" stroke="#6bb8ef" stroke-width="1.2"/><circle cx="305.7" cy="120.3" r="4.3" fill="none" stroke="#6bb8ef" stroke-width="1.2"/><path d="M298.6 150V136.6H290.4V155.5H298.6V153" fill="none" stroke="#d4d4d4" stroke-width="1.2"/><path d="M300.4 136.6H303.4L309.6 155.5H300.4" fill="none" stroke="#6bb8ef" stroke-width="1.2"/><path d="M294.8 151.4H300" stroke="#d4d4d4" stroke-width="1.2"/><path d="M299.4 148.6L303 151.4L299.4 154.2Z" fill="#f2f2f2"/><path d="M391.6 76.8A8.6 8.6 0 1 0 399.6 83.5" fill="none" stroke="#d4d4d4" stroke-width="1.2"/><path d="M390.8 73.4L395.4 76.6L391 80Z" fill="#f2f2f2"/><path d="M389.5 106.8V123.5H381.6Z" fill="none" stroke="#d4d4d4" stroke-width="1.1"/><path d="M391.4 106.8V123.5H399.5Z" fill="none" stroke="#6bb8ef" stroke-width="1.1"/><path d="M381.5 143V136.7H400.7V155.4H394" fill="none" stroke="#6bb8ef" stroke-width="1.2"/><rect x="381.5" y="145.7" width="10.2" height="9.7" fill="none" stroke="#d4d4d4" stroke-width="1.2"/><path d="M469 75.9H478" stroke="#6bb8ef" stroke-width="1.1" stroke-dasharray="1.2 1"/><path d="M480 75.9H488.8" stroke="#d4d4d4" stroke-width="1.1"/><path d="M472 78.2L482.8 88.8M479.6 74.6L479 89" stroke="#eeeeee" stroke-width="1.6" fill="none"/><circle cx="478.7" cy="91.3" r="2.2" fill="none" stroke="#eeeeee" stroke-width="1.3"/><circle cx="484.7" cy="89.8" r="2.2" fill="none" stroke="#eeeeee" stroke-width="1.3"/><path d="M469.2 124.3V118" stroke="#d4d4d4" stroke-width="1.2"/><path d="M469.2 118C469.2 110 473 105.4 481 105.4" fill="none" stroke="#6bb8ef" stroke-width="1.2"/><path d="M481 105.4H488.8" stroke="#d4d4d4" stroke-width="1.2"/><rect x="470.5" y="137.8" width="6.6" height="6.4" fill="none" stroke="#d4d4d4" stroke-width="1.1"/><rect x="480.5" y="137.8" width="6.6" height="6.4" fill="none" stroke="#6bb8ef" stroke-width="1.1"/><rect x="470.5" y="147.6" width="6.6" height="6.4" fill="none" stroke="#6bb8ef" stroke-width="1.1"/><rect x="480.5" y="147.6" width="6.6" height="6.4" fill="none" stroke="#6bb8ef" stroke-width="1.1"/><path d="M584 74.2V80.5L573.5 91L569.5 87Z" fill="#f7cd6b"/><path d="M569.5 87L573.5 91L571.3 93.2C570 94.2 567.2 91.5 568 90Z" fill="#ee5566"/><path d="M573.9 93.4H584" stroke="#6bb8ef" stroke-width="1.1"/><path d="M563.9 93.4H568" stroke="#d4d4d4" stroke-width="1.1"/><rect x="564.4" y="110.8" width="13" height="12" fill="none" stroke="#d4d4d4" stroke-width="1.6"/><path d="M564.4 110.8L569.6 106.2H582.8V117.6L577.4 122.8M577.4 110.8L582.8 106.2" fill="none" stroke="#6bb8ef" stroke-width="1.1"/><path d="M584 139.6H571.5A6.5 6.5 0 0 0 571.5 152.6H584" fill="none" stroke="#6bb8ef" stroke-width="1.2"/><path d="M584 143.4H572.5A2.7 2.7 0 0 0 572.5 148.8H584" fill="none" stroke="#d4d4d4" stroke-width="1.2"/></svg>
<svg style="position:absolute;left:0;top:64px" width="1916" height="124" viewBox="0 64 1916 124"><path d="M674.4 72V112M713.5 72V112M677 79.9H711" stroke="#d4d4d4" stroke-width="1.2" fill="none"/><path d="M675.2 79.9L680.5 77V82.8ZM712.7 79.9L707.4 77V82.8Z" fill="#d4d4d4"/><path d="M693.7 91.1L695.5 99.1L691.9 99.1Z" fill="#f7cd6b"/><path d="M682.6 95.4L689.3 100.1L686.6 102.5Z" fill="#f7cd6b"/><path d="M704.8 95.4L700.8 102.5L698.1 100.1Z" fill="#f7cd6b"/><path d="M679.1 106.2L686.7 104.4L686.7 108.0Z" fill="#f7cd6b"/><path d="M708.3 106.2L700.7 108.0L700.7 104.4Z" fill="#f7cd6b"/><path d="M738.3 75.4V92.3M757.7 75.4V92.3" stroke="#d4d4d4" stroke-width="1.2"/><path d="M741 81.1H755" stroke="#6bb8ef" stroke-width="1.2"/><path d="M739.3 81.1L742.6 79.2V83ZM756.7 81.1L753.4 79.2V83Z" fill="#6bb8ef"/><circle cx="753.2" cy="111" r="3.4" fill="none" stroke="#d4d4d4" stroke-width="1.2"/><path d="M749.8 111.5H745.3L740.6 119.6" fill="none" stroke="#d4d4d4" stroke-width="1.2"/><path d="M738.6 122.4L739.5 117.3L743.2 119.6Z" fill="#d4d4d4"/><rect x="739.2" y="137.6" width="17.4" height="16" fill="none" stroke="#d4d4d4" stroke-width="1.1"/><path d="M739.2 141.8H756.6M739.2 145.8H756.6M739.2 149.8H756.6M745 141.8V153.6M750.8 141.8V153.6" stroke="#d4d4d4" stroke-width="1"/><path d="M812.4 86.6H835.8L825.6 101.6H802.2Z" fill="#cfcfcf" stroke="#3b4453" stroke-width=".7"/><path d="M812.4 79.3H835.8L825.6 94.3H802.2Z" fill="#d4d4d4" stroke="#3b4453" stroke-width=".7"/><path d="M812.4 72.0H835.8L825.6 87.0H802.2Z" fill="#d9d9d9" stroke="#3b4453" stroke-width=".7"/><rect x="825" y="88.8" width="16.8" height="22.8" fill="#ededed" stroke="#3b4453" stroke-width=".8"/><rect x="827.4" y="91.6" width="11.1" height="7.8" fill="#6fc0f7" stroke="#4a5a6c" stroke-width=".6"/><path d="M829 104.7H838M829 108H838M831 103.6V105.8M836 106.9V109.1" stroke="#555" stroke-width=".8"/><circle cx="874.5" cy="81.4" r="6.2" fill="#f7cd6b"/><path d="M871.7 87.3H877.3V90.4A2.8 2.8 0 0 1 871.7 90.4Z" fill="#f4f4f4"/><circle cx="898.2" cy="83.4" r="5.5" fill="#f7cd6b"/><path d="M905.0 83.4L907.8 83.4" stroke="#f7cd6b" stroke-width="1.1"/><path d="M903.0 88.2L905.0 90.2" stroke="#f7cd6b" stroke-width="1.1"/><path d="M898.2 90.2L898.2 93.0" stroke="#f7cd6b" stroke-width="1.1"/><path d="M893.4 88.2L891.4 90.2" stroke="#f7cd6b" stroke-width="1.1"/><path d="M891.4 83.4L888.6 83.4" stroke="#f7cd6b" stroke-width="1.1"/><path d="M893.4 78.6L891.4 76.6" stroke="#f7cd6b" stroke-width="1.1"/><path d="M898.2 76.6L898.2 73.8" stroke="#f7cd6b" stroke-width="1.1"/><path d="M903.0 78.6L905.0 76.6" stroke="#f7cd6b" stroke-width="1.1"/><path d="M923.7 84.0V80.1A4.5 4.5 0 0 1 932.7 80.1V82.3" fill="none" stroke="#f7cd6b" stroke-width="1.5"/><rect x="914.0" y="84.0" width="14.2" height="8.7" fill="#f7cd6b"/><rect x="920.5" y="86.6" width="1.2" height="3.5" fill="#3b4453"/><path d="M870.0 106.2H880.8L874.8 113.0H864.0Z" fill="#d4d4d4" stroke="#3b4453" stroke-width=".7"/><circle cx="880" cy="118" r="3.9" fill="#4fccd4"/><path d="M878.2 121.7H881.8V123.7A1.8 1.8 0 0 1 878.2 123.7Z" fill="#f4f4f4"/><path d="M899.6 113.6H911.2L905.6 120.6H894.0Z" fill="#79c0f5" stroke="#3b4453" stroke-width=".7"/><path d="M899.6 109.3H911.2L905.6 116.3H894.0Z" fill="#d4d4d4" stroke="#3b4453" stroke-width=".7"/><path d="M899.6 105.0H911.2L905.6 112.0H894.0Z" fill="#d4d4d4" stroke="#3b4453" stroke-width=".7"/><path d="M912.4 117.2L907 122.6" stroke="#d4d4d4" stroke-width="1.2"/><path d="M905 124.4L906.4 119.8L909.8 123.2Z" fill="#f0f0f0"/><path d="M930.0 106.2H940.8L934.8 113.0H924.0Z" fill="#d4d4d4" stroke="#3b4453" stroke-width=".7"/><path d="M942.1 118.5L932.9 118.5" stroke="#4fccd4" stroke-width="1.1"/><path d="M939.8 122.5L935.2 114.5" stroke="#4fccd4" stroke-width="1.1"/><path d="M935.2 122.5L939.8 114.5" stroke="#4fccd4" stroke-width="1.1"/><path d="M937.5 123.1L937.5 113.9" stroke="#4fccd4" stroke-width="1.1"/><path d="M941.5 120.8L933.5 116.2" stroke="#4fccd4" stroke-width="1.1"/><path d="M933.5 120.8L941.5 116.2" stroke="#4fccd4" stroke-width="1.1"/><path d="M960.0 106.2H970.8L964.8 113.0H954.0Z" fill="#d4d4d4" stroke="#3b4453" stroke-width=".7"/><path d="M966.7 117.6V115.1A2.9 2.9 0 0 1 972.5 115.1V117.6" fill="none" stroke="#4fccd4" stroke-width="1.5"/><rect x="965.0" y="117.6" width="9.2" height="7.2" fill="#4fccd4"/><rect x="969.0" y="119.8" width="1.2" height="2.9" fill="#3b4453"/><path d="M990.6 117.8H1003.8L997.2 124.8H984.0Z" fill="#d4d4d4" stroke="#3b4453" stroke-width=".7"/><path d="M990.6 113.6H1003.8L997.2 120.6H984.0Z" fill="#d4d4d4" stroke="#3b4453" stroke-width=".7"/><path d="M990.6 109.4H1003.8L997.2 116.4H984.0Z" fill="#79c0f5" stroke="#3b4453" stroke-width=".7"/><circle cx="994" cy="108.6" r="3.9" fill="#c4c4c4"/><path d="M869.6 145.0H881.2L875.6 152.0H864.0Z" fill="#d4d4d4" stroke="#3b4453" stroke-width=".7"/><path d="M869.6 140.7H881.2L875.6 147.7H864.0Z" fill="#d4d4d4" stroke="#3b4453" stroke-width=".7"/><path d="M869.6 136.4H881.2L875.6 143.4H864.0Z" fill="#d4d4d4" stroke="#3b4453" stroke-width=".7"/><circle cx="880" cy="148.6" r="3.9" fill="#f7cd6b"/><path d="M878.2 152.3H881.8V154.3A1.8 1.8 0 0 1 878.2 154.3Z" fill="#f4f4f4"/><path d="M899.6 145.0H911.2L905.6 152.0H894.0Z" fill="#79c0f5" stroke="#3b4453" stroke-width=".7"/><path d="M899.6 140.7H911.2L905.6 147.7H894.0Z" fill="#d4d4d4" stroke="#3b4453" stroke-width=".7"/><path d="M899.6 136.4H911.2L905.6 143.4H894.0Z" fill="#d4d4d4" stroke="#3b4453" stroke-width=".7"/><path d="M905.4 155L911 149.2" stroke="#d4d4d4" stroke-width="1.2"/><path d="M913 147.4L911.6 152L908.2 148.6Z" fill="#f0f0f0"/><path d="M929.6 145.0H941.2L935.6 152.0H924.0Z" fill="#d4d4d4" stroke="#3b4453" stroke-width=".7"/><path d="M929.6 140.7H941.2L935.6 147.7H924.0Z" fill="#d4d4d4" stroke="#3b4453" stroke-width=".7"/><path d="M929.6 136.4H941.2L935.6 143.4H924.0Z" fill="#d4d4d4" stroke="#3b4453" stroke-width=".7"/><circle cx="937.9" cy="149.7" r="3.2" fill="#f7cd6b"/><rect x="942.3" y="148.8" width="1.8" height="1.8" fill="#f7cd6b"/><rect x="940.7" y="152.5" width="1.8" height="1.8" fill="#f7cd6b"/><rect x="937.0" y="154.1" width="1.8" height="1.8" fill="#f7cd6b"/><rect x="933.3" y="152.5" width="1.8" height="1.8" fill="#f7cd6b"/><rect x="931.7" y="148.8" width="1.8" height="1.8" fill="#f7cd6b"/><rect x="933.3" y="145.1" width="1.8" height="1.8" fill="#f7cd6b"/><rect x="937.0" y="143.5" width="1.8" height="1.8" fill="#f7cd6b"/><rect x="940.7" y="145.1" width="1.8" height="1.8" fill="#f7cd6b"/><path d="M960.0 137.4H970.8L964.8 144.2H954.0Z" fill="#d4d4d4" stroke="#3b4453" stroke-width=".7"/><path d="M968.5 148.8V145.7A3.1 3.1 0 0 1 974.7 145.7V147.4" fill="none" stroke="#f7cd6b" stroke-width="1.5"/><rect x="962.0" y="148.8" width="9.6" height="7.0" fill="#f7cd6b"/><rect x="966.2" y="150.9" width="1.2" height="2.8" fill="#3b4453"/><path d="M989.6 145.0H1001.2L995.6 152.0H984.0Z" fill="#d4d4d4" stroke="#3b4453" stroke-width=".7"/><path d="M989.6 140.7H1001.2L995.6 147.7H984.0Z" fill="#d4d4d4" stroke="#3b4453" stroke-width=".7"/><path d="M989.6 136.4H1001.2L995.6 143.4H984.0Z" fill="#d4d4d4" stroke="#3b4453" stroke-width=".7"/><g transform="rotate(42 998 151)"><rect x="994.6" y="148.8" width="6.6" height="4.4" fill="#f7cd6b"/><path d="M1001.2 148.4h2.2v1.4h2.4v2.4h-2.4v1.4h-2.2Z" fill="#f4f4f4"/></g><path d="M1147.9 70.2H1163.4L1170.2 77V101.1H1147.9Z" fill="#86c9fa"/><path d="M1163.4 70.2V77H1170.2Z" fill="#c4e4fc"/><rect x="1131.6" y="83.4" width="25" height="18" fill="#6b7382" stroke="#c4c6ca" stroke-width="1.1"/><circle cx="1155.9" cy="101.1" r="8.7" fill="#6b7382" fill-opacity=".85" stroke="#c4c6ca" stroke-width="1.1"/><rect x="1130" y="100" width="3.2" height="3.2" fill="#f0f0f0"/><rect x="1180" y="81.6" width="11.6" height="9" fill="#6b7382" stroke="#c4c6ca" stroke-width="1"/><circle cx="1191.8" cy="89.8" r="3.5" fill="#6b7382" stroke="#c4c6ca" stroke-width="1"/><rect x="1179" y="89.6" width="2.2" height="2.2" fill="#f0f0f0"/><polygon points="1193.4,74.2 1194.3,77.4 1197.2,75.8 1195.6,78.7 1198.8,79.6 1195.6,80.5 1197.2,83.4 1194.3,81.8 1193.4,85.0 1192.5,81.8 1189.6,83.4 1191.2,80.5 1188.0,79.6 1191.2,78.7 1189.6,75.8 1192.5,77.4" fill="#f7cd6b"/><rect x="1180" y="110" width="11.6" height="10" fill="#6b7382" stroke="#c4c6ca" stroke-width="1"/><circle cx="1194" cy="119.8" r="3.6" fill="#6b7382" stroke="#c4c6ca" stroke-width="1"/><rect x="1179" y="119" width="2.2" height="2.2" fill="#f0f0f0"/><g transform="translate(1189.4 115) rotate(-43.1)"><path d="M0 0L3 -1.7V1.7Z" fill="#cfcfcf"/><rect x="3" y="-1.7" width="7.1" height="3.4" fill="#f3c766"/><rect x="10.1" y="-1.7" width="2.5" height="3.4" rx="1" fill="#ef5566"/></g><path d="M1179.2 137.8H1188L1196.7 147.1L1188.5 155.3L1179.2 146Z" fill="#d8d8d8"/><circle cx="1182.6" cy="141" r="1.1" fill="#3b4453"/><path d="M1184 145l5 5M1186.5 143.5l4.5 4.5" stroke="#777" stroke-width=".7"/><g transform="translate(1189.4 145) rotate(-42.4)"><path d="M0 0L3 -1.7V1.7Z" fill="#cfcfcf"/><rect x="3" y="-1.7" width="7.0" height="3.4" fill="#f3c766"/><rect x="10.0" y="-1.7" width="2.5" height="3.4" rx="1" fill="#ef5566"/></g><rect x="1244.4" y="72" width="25.2" height="35" fill="#e0e0e0"/><rect x="1247.7" y="75.3" width="17" height="11.5" fill="#7cc6f8" stroke="#55606e" stroke-width=".7"/><path d="M1249 93.9H1263M1249 100.9H1263M1252 92V95.8M1260.5 99V102.8" stroke="#666" stroke-width=".9"/><path d="M1263.6 101.1L1270.7 96.1L1279.5 107.6L1273.4 111.5Z" fill="#f7cd6b"/><path d="M1270.7 96.1L1275.5 92.8L1277.6 95.6L1280.6 93.4L1283.2 96.8L1280.2 99L1284 104.4L1279.5 107.6Z" fill="#f2f2f2"/><path d="M1312.9 84.1L1307.85 75.35A10.1 10.1 0 0 1 1317.95 75.35Z" fill="#fbc02d"/><path d="M1312.9 84.1L1317.95 75.35A10.1 10.1 0 0 1 1323.00 84.10Z" fill="#fb8c3c"/><path d="M1312.9 84.1L1323.00 84.10A10.1 10.1 0 0 1 1317.95 92.85Z" fill="#e8534f"/><path d="M1312.9 84.1L1317.95 92.85A10.1 10.1 0 0 1 1307.85 92.85Z" fill="#8b5cf6"/><path d="M1312.9 84.1L1307.85 92.85A10.1 10.1 0 0 1 1302.80 84.10Z" fill="#1bb1d1"/><path d="M1312.9 84.1L1302.80 84.10A10.1 10.1 0 0 1 1307.85 75.35Z" fill="#4bc97b"/><rect x="1302.8" y="104.9" width="20" height="2.4" fill="#dcdcdc"/><rect x="1302.8" y="112.9" width="20" height="4" fill="#dcdcdc"/><rect x="1302.8" y="120.3" width="20" height="4.4" fill="#dcdcdc"/><path d="M1302.8 138.3H1321.7" stroke="#c8c8c8" stroke-width="1" stroke-dasharray="1.6 1.4"/><path d="M1302.8 142H1321.7" stroke="#c8c8c8" stroke-width="1.2" stroke-dasharray="3.4 1.4"/><path d="M1302.8 145.5H1321.7" stroke="#c8c8c8" stroke-width="1"/><path d="M1302.8 148.8H1321.7" stroke="#c8c8c8" stroke-width="1.2" stroke-dasharray="3.4 1.4"/><path d="M1302.8 152.4H1321.7" stroke="#c8c8c8" stroke-width="1" stroke-dasharray="5 1 1 1"/><path d="M1486.2 171.6L1493 178.4M1488.4 178.8H1493.3V173.9" stroke="#cfcfcf" stroke-width="1.3" fill="none"/><path d="M1886.2 171.6L1893 178.4M1888.4 178.8H1893.3V173.9" stroke="#cfcfcf" stroke-width="1.3" fill="none"/><path d="M1512.8 79.2H1509V111H1512.8M1530.3 111H1534.2V93.4" fill="none" stroke="#dcdcdc" stroke-width="1.3"/><rect x="1515.4" y="83.2" width="12.4" height="9.2" fill="#4a6a8e" stroke="#79c0f5" stroke-width="1.1"/><circle cx="1521.3" cy="102.5" r="6.3" fill="#6b7382" stroke="#c4c6ca" stroke-width="1.1"/><polygon points="1536.4,72.3 1537.7,78.6 1542.5,74.3 1539.9,80.2 1546.3,79.5 1540.7,82.7 1546.3,85.9 1539.9,85.2 1542.5,91.1 1537.7,86.8 1536.4,93.1 1535.1,86.8 1530.3,91.1 1532.9,85.2 1526.5,85.9 1532.1,82.7 1526.5,79.5 1532.9,80.2 1530.3,74.3 1535.1,78.6" fill="#f7cd6b"/><rect x="1558.4" y="76.6" width="7.2" height="5.8" fill="#4a6a8e" stroke="#79c0f5" stroke-width="1"/><circle cx="1561.9" cy="87.4" r="3.6" fill="#6b7382" stroke="#c4c6ca" stroke-width="1"/><path d="M1568.2 74.6H1571.6V93H1568.2" fill="none" stroke="#dcdcdc" stroke-width="1.2"/><path d="M1569 82L1575 88M1575 82L1569 88" stroke="#f0485a" stroke-width="1.8"/><path d="M1559 105.6H1556.6V122H1559M1565.4 105.6H1567.8V122H1565.4" fill="none" stroke="#dcdcdc" stroke-width="1.1"/><rect x="1559.6" y="107.6" width="5.2" height="4.2" fill="#4a6a8e" stroke="#79c0f5" stroke-width="1"/><circle cx="1561.9" cy="117" r="2.7" fill="#6b7382" stroke="#c4c6ca" stroke-width="1"/><g transform="translate(1566.2 124.4) rotate(-43.1)"><path d="M0 0L3 -1.7V1.7Z" fill="#cfcfcf"/><rect x="3" y="-1.7" width="7.1" height="3.4" fill="#f3c766"/><rect x="10.1" y="-1.7" width="2.5" height="3.4" rx="1" fill="#ef5566"/></g><rect x="1552.5" y="132.7" width="28" height="26" fill="#44607f" stroke="#7cc4f8" stroke-width="1.2"/><path d="M1560.4 136.4H1558V152.8H1560.4M1567.4 136.4H1569.8V146" fill="none" stroke="#d0d0d0" stroke-width="1.1"/><rect x="1561.2" y="138.5" width="5.4" height="4.2" fill="#2f7a4a" stroke="#5fd47e" stroke-width="1"/><circle cx="1563.9" cy="148" r="2.7" fill="#2f7a4a" stroke="#5fd47e" stroke-width="1"/><path transform="translate(1567.6 145.4) scale(0.9)" d="M0 0L0 10.2L2.6 8L4.6 12.2L6.4 11.4L4.4 7.3L7.6 7.1Z" fill="#ffffff" stroke="#3b4453" stroke-width=".5"/><rect x="1612" y="87.9" width="35.6" height="7.7" fill="#f7cd6b"/><rect x="1614.4" y="87.9" width="1" height="3.4" fill="#8a6d2f"/><rect x="1618.0" y="87.9" width="1" height="2.2" fill="#8a6d2f"/><rect x="1621.5" y="87.9" width="1" height="3.4" fill="#8a6d2f"/><rect x="1625.1" y="87.9" width="1" height="2.2" fill="#8a6d2f"/><rect x="1628.6" y="87.9" width="1" height="3.4" fill="#8a6d2f"/><rect x="1632.2" y="87.9" width="1" height="2.2" fill="#8a6d2f"/><rect x="1635.7" y="87.9" width="1" height="3.4" fill="#8a6d2f"/><rect x="1639.2" y="87.9" width="1" height="2.2" fill="#8a6d2f"/><rect x="1642.8" y="87.9" width="1" height="3.4" fill="#8a6d2f"/><rect x="1646.4" y="87.9" width="1" height="2.2" fill="#8a6d2f"/><path transform="translate(1677 79.6) scale(1.05)" d="M0 0L0 10.2L2.6 8L4.6 12.2L6.4 11.4L4.4 7.3L7.6 7.1Z" fill="#ffffff" stroke="#3b4453" stroke-width=".5"/><path d="M1686.5 74L1680.5 80.4H1684L1682 84.4L1689 78H1685.4L1688.4 74Z" fill="#f7cd6b"/><rect x="1684.9" y="82.4" width="12" height="11" fill="#f2f2f2"/><path d="M1689 85.4H1695M1689 88H1695M1689 90.6H1695" stroke="#4a9be0" stroke-width="1"/><path d="M1686.6 85.4H1687.8M1686.6 88H1687.8M1686.6 90.6H1687.8" stroke="#4a9be0" stroke-width="1.1"/><rect x="1677.7" y="105.7" width="16.6" height="16.6" fill="#2e6b4a" stroke="#5fd47e" stroke-width="1" stroke-dasharray="2 1.2"/><path d="M1683.4 107.6H1692.4V116.6H1683.4Z" fill="#6fd391"/><path d="M1679.6 111.4H1682.4V117.6H1688.6V120.4H1679.6Z" fill="#6fd391"/><path transform="translate(1689 113.6) scale(0.95)" d="M0 0L0 10.2L2.6 8L4.6 12.2L6.4 11.4L4.4 7.3L7.6 7.1Z" fill="#ffffff" stroke="#3b4453" stroke-width=".5"/><rect x="1679.1" y="136.1" width="14.5" height="19.8" fill="#d2d2d2"/><rect x="1681.2" y="138.2" width="10.3" height="4" fill="#666"/><rect x="1681.2" y="144.4" width="2.7" height="2.6" fill="#666"/><rect x="1684.9" y="144.4" width="2.7" height="2.6" fill="#666"/><rect x="1688.6" y="144.4" width="2.7" height="2.6" fill="#666"/><rect x="1681.2" y="148.1" width="2.7" height="2.6" fill="#666"/><rect x="1684.9" y="148.1" width="2.7" height="2.6" fill="#666"/><rect x="1688.6" y="148.1" width="2.7" height="2.6" fill="#666"/><rect x="1681.2" y="151.8" width="2.7" height="2.6" fill="#666"/><rect x="1684.9" y="151.8" width="2.7" height="2.6" fill="#666"/><rect x="1688.6" y="151.8" width="2.7" height="2.6" fill="#666"/><rect x="1723.9" y="77" width="27.9" height="31.2" fill="#dcae72"/><path d="M1731 78.2V75.6H1734.5C1734.5 72.4 1741 72.4 1741 75.6H1744.4V78.2Z" fill="#f4f4f4"/><path d="M1732.9 84.6H1747.7L1756.2 93.1V113.1H1732.9Z" fill="#dadada" stroke="#3b4453" stroke-width=".8"/><path d="M1747.7 84.6V93.1H1756.2Z" fill="#f0f0f0"/><rect x="1776.1" y="74" width="14.8" height="17.4" fill="#cfcfcf"/><path d="M1778.4 77.5H1788.4M1778.4 80.8H1786M1778.4 84.1H1784.4M1778.4 87.4H1785" stroke="#8a8a8a" stroke-width=".9"/><path d="M1784.6 80.4L1793.4 90.4M1795.8 81.8L1786.6 90.4" stroke="#f4f4f4" stroke-width="1.5"/><circle cx="1785.8" cy="91.8" r="1.9" fill="none" stroke="#f4f4f4" stroke-width="1.1"/><circle cx="1794" cy="91.8" r="1.9" fill="none" stroke="#f4f4f4" stroke-width="1.1"/><path d="M1777.8 104.9H1786.4L1789.6 108V121.2H1777.8Z" fill="#c4c4c4"/><path d="M1781.8 108.6H1790.4L1794 112.2V125.2H1781.8Z" fill="#dadada" stroke="#3b4453" stroke-width=".7"/><path d="M1790.4 108.6V112.2H1794Z" fill="#f2f2f2"/><path d="M1839.9 77H1857.2V89.9H1880V107.1H1839.9Z" fill="#dcdcdc"/></svg>
<span style="position:absolute;left:611.90px;top:66px;font:normal 400 51px/1 'Liberation Sans', sans-serif;transform:scaleX(0.9618);transform-origin:0 0;color:#dadada;white-space:pre;">A</span>
<svg style="position:absolute;left:0;top:980px" width="1916" height="36" viewBox="0 980 1916 36"><path d="M1241.3 987.8V1007.2M1246.4 987.8V1007.2M1251.6 987.8V1007.2M1236.8 992.2H1256.2M1236.8 997.4H1256.2M1236.8 1002.7H1256.2" stroke="#e4e4e4" stroke-width="1.2"/><rect x="1269.1" y="990.3" width="2.8" height="2.6" fill="#e4e4e4"/><rect x="1269.1" y="996.1" width="2.8" height="2.6" fill="#e4e4e4"/><rect x="1269.1" y="1002.1" width="2.8" height="2.6" fill="#e4e4e4"/><rect x="1275.0" y="990.3" width="2.8" height="2.6" fill="#e4e4e4"/><rect x="1275.0" y="996.1" width="2.8" height="2.6" fill="#e4e4e4"/><rect x="1275.0" y="1002.1" width="2.8" height="2.6" fill="#e4e4e4"/><rect x="1281.0" y="990.3" width="2.8" height="2.6" fill="#e4e4e4"/><rect x="1281.0" y="996.1" width="2.8" height="2.6" fill="#e4e4e4"/><rect x="1281.0" y="1002.1" width="2.8" height="2.6" fill="#e4e4e4"/><path d="M1320 995H1329.2M1324.6 990.4V999.6" stroke="#e4e4e4" stroke-width="1.2"/><rect x="1327.1" y="1000.4" width="12.9" height="4.8" fill="#e4e4e4"/><rect x="1328.2" y="1001.5" width="2" height="2.6" fill="#3b4453"/><path d="M1351.6 988.2V1007.2H1370.8M1351.6 1001.8H1357.4V1007.2" stroke="#e4e4e4" stroke-width="1.2" fill="none"/><circle cx="1389.1" cy="998.1" r="7.8" fill="none" stroke="#e4e4e4" stroke-width="1.2"/><path d="M1401 998.7H1389L1397.6 989.9" stroke="#e4e4e4" stroke-width="1.2" fill="none"/><path d="M1433.6 989.9L1448.1 1004.5" stroke="#d9534f" stroke-width="1.2"/><path d="M1441.5 988.2V1005.8" stroke="#3fd15d" stroke-width="1.3"/><rect x="1439.6" y="995.5" width="3" height="3" fill="#3b4453" stroke="#e4e4e4" stroke-width=".9"/><path d="M1482.2 1004.9H1501.9" stroke="#b8bbc0" stroke-width="1.6"/><path d="M1483 1004.4L1497.1 990.2" stroke="#e4e4e4" stroke-width="1.2"/><rect x="1488.2" y="996.6" width="3" height="3" fill="#e4e4e4"/><rect x="1514.8" y="990.5" width="16.9" height="16.7" fill="none" stroke="#ffffff" stroke-width="1.2"/><rect x="1512.2" y="988.2" width="5" height="5" fill="#5c8cc0" stroke="#ffffff" stroke-width="1"/><path d="M1573.8 988.4L1576.8 998.4L1582.2 1007.8L1576.2 1003.0L1573.8 1005.0L1571.3999999999999 1003.0L1565.3999999999999 1007.8L1570.8 998.4Z" fill="#ffffff"/><circle cx="1581.4" cy="992.3" r="3.1" fill="none" stroke="#ffffff" stroke-width="1"/><path d="M1603.7 988.4L1606.7 998.4L1612.1000000000001 1007.8L1606.1000000000001 1003.0L1603.7 1005.0L1601.3 1003.0L1595.3 1007.8L1600.7 998.4Z" fill="#d8d8d8"/><path d="M1612.8 988.6L1608.6 993.4H1611L1609.4 996.4L1614 991.6H1611.4Z" fill="#d8d8d8"/><path d="M1634.5 988.4L1637.5 998.4L1642.9 1007.8L1636.9 1003.0L1634.5 1005.0L1632.1 1003.0L1626.1 1007.8L1631.5 998.4Z" fill="#d8d8d8"/><path fill-rule="evenodd" fill="#dcdcdc" d="M1717.23,996.22 L1719.79,996.29 L1719.79,999.31 L1717.23,999.38 L1716.18,1001.94 L1717.93,1003.79 L1715.79,1005.93 L1713.94,1004.18 L1711.38,1005.23 L1711.31,1007.79 L1708.29,1007.79 L1708.22,1005.23 L1705.66,1004.18 L1703.81,1005.93 L1701.67,1003.79 L1703.42,1001.94 L1702.37,999.38 L1699.81,999.31 L1699.81,996.29 L1702.37,996.22 L1703.42,993.66 L1701.67,991.81 L1703.81,989.67 L1705.66,991.42 L1708.22,990.37 L1708.29,987.81 L1711.31,987.81 L1711.38,990.37 L1713.94,991.42 L1715.79,989.67 L1717.93,991.81 L1716.18,993.66Z M1706.3 997.8a3.5 3.5 0 1 0 7.0 0a3.5 3.5 0 1 0 -7.0 0Z"/><path d="M1751 997.5H1770.2M1760.5 988V1006.9" stroke="#e4e4e4" stroke-width="3.3"/><rect x="1784.2" y="988.8" width="7.4" height="7.2" fill="none" stroke="#e4e4e4" stroke-width="1.1"/><circle cx="1799.5" cy="996.6" r="4.3" fill="none" stroke="#e4e4e4" stroke-width="1.1"/><path d="M1787.4 1007.4H1796.6L1792 1000.2Z" fill="none" stroke="#e4e4e4" stroke-width="1.1"/><path d="M1817.2 985.1H1832L1837.4 990.5V1002L1832 1006.9H1817.2Z" fill="#3a73b8"/><path d="M1832 985.1L1837.4 990.5H1832Z" fill="#7fb2e6"/><rect x="1817.2" y="999.2" width="10.2" height="7.7" fill="#f0b323"/><path d="M1817.2 990.1H1832M1822.3 985.1V999.2" stroke="#ffffff" stroke-width="1.1"/><circle cx="1822.3" cy="990.1" r="2" fill="#3a73b8" stroke="#ffffff" stroke-width="1"/><path d="M1826.8 1004.2L1831.4 1008.6L1841.4 999.8" fill="none" stroke="#3fb54a" stroke-width="3.2"/><rect x="1855.6" y="990.6" width="18.6" height="13.6" fill="none" stroke="#e4e4e4" stroke-width="1.1"/><path d="M1858 1002L1862.6 997.6M1871.8 992.8L1867.2 997.2M1858 998.6V1002H1861.4M1868.4 992.8H1871.8V996.2" stroke="#e4e4e4" stroke-width="1.1" fill="none"/><path d="M1884.9 990.2H1904.9M1884.9 997.6H1904.9M1884.9 1005H1904.9" stroke="#e8e8e8" stroke-width="2.6"/></svg>
</body></html>
